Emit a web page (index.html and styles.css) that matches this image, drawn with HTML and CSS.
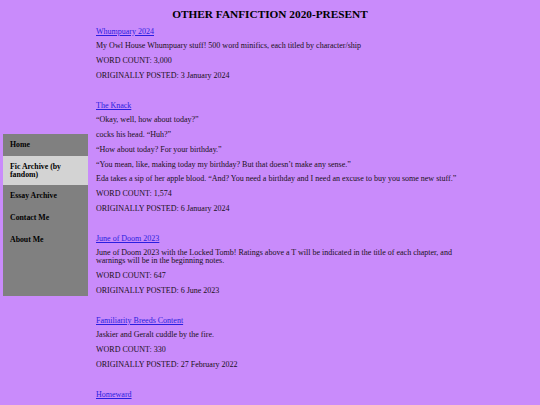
FILE: index.html
```html
<!DOCTYPE html>
<html>
<head>
<meta charset="utf-8">
<link rel="stylesheet" href="styles.css">
</head>
<body>
<h1 class="title">OTHER FANFICTION 2020-PRESENT</h1>
<div class="layout">
  <nav class="sidebar">
    <a class="nav-item" href="#">Home</a>
    <a class="nav-item active" href="#">Fic Archive (by fandom)</a>
    <a class="nav-item" href="#">Essay Archive</a>
    <a class="nav-item" href="#">Contact Me</a>
    <a class="nav-item" href="#">About Me</a>
  </nav>
  <main class="content">
    <section class="entry">
      <p><a href="#">Whumpuary 2024</a></p>
      <p>My Owl House Whumpuary stuff! 500 word minifics, each titled by character/ship</p>
      <p>WORD COUNT: 3,000</p>
      <p>ORIGINALLY POSTED: 3 January 2024</p>
    </section>
    <section class="entry">
      <p><a href="#">The Knack</a></p>
      <p>“Okay, well, how about today?”</p>
      <p>cocks his head. “Huh?”</p>
      <p>“How about today? For your birthday.”</p>
      <p>“You mean, like, making today my birthday? But that doesn’t make any sense.”</p>
      <p>Eda takes a sip of her apple blood. “And? You need a birthday and I need an excuse to buy you some new stuff.”</p>
      <p>WORD COUNT: 1,574</p>
      <p>ORIGINALLY POSTED: 6 January 2024</p>
    </section>
    <section class="entry">
      <p><a href="#">June of Doom 2023</a></p>
      <p>June of Doom 2023 with the Locked Tomb! Ratings above a T will be indicated in the title of each chapter, and warnings will be in the beginning notes.</p>
      <p>WORD COUNT: 647</p>
      <p>ORIGINALLY POSTED: 6 June 2023</p>
    </section>
    <section class="entry">
      <p><a href="#">Familiarity Breeds Content</a></p>
      <p>Jaskier and Geralt cuddle by the fire.</p>
      <p>WORD COUNT: 330</p>
      <p>ORIGINALLY POSTED: 27 February 2022</p>
    </section>
    <section class="entry">
      <p><a href="#">Homeward</a></p>
    </section>
  </main>
</div>
</body>
</html>
```
FILE: styles.css
```css
html, body {
  margin: 0;
  padding: 0;
  background: #c98bfb;
  font-family: "Liberation Serif", "Times New Roman", serif;
  color: #1a1020;
}
.title {
  margin: 0;
  padding-top: 8px;
  font-size: 11.3px;
  line-height: 12px;
  text-align: center;
  font-weight: bold;
  color: #000;
}
.layout {
  display: flex;
  align-items: flex-start;
  padding-top: 1px;
}
.sidebar {
  margin-left: 3px;
  margin-top: 113px;
  width: 85px;
  height: 162px;
  background: #808080;
  display: flex;
  flex-direction: column;
  flex-shrink: 0;
}
.nav-item {
  display: block;
  padding: 7px 7px;
  font-size: 7.8px;
  line-height: 7.8px;
  font-weight: bold;
  color: #000;
  text-decoration: none;
}
.nav-item.active {
  background: #d3d3d3;
}
.content {
  margin-left: 8px;
  width: 372px;
  font-size: 8px;
}
.content p {
  margin: 6.7px 0;
  line-height: 8px;
}
.entry {
  margin-bottom: 22px;
}
.content a {
  color: #2a1ee0;
}
```
